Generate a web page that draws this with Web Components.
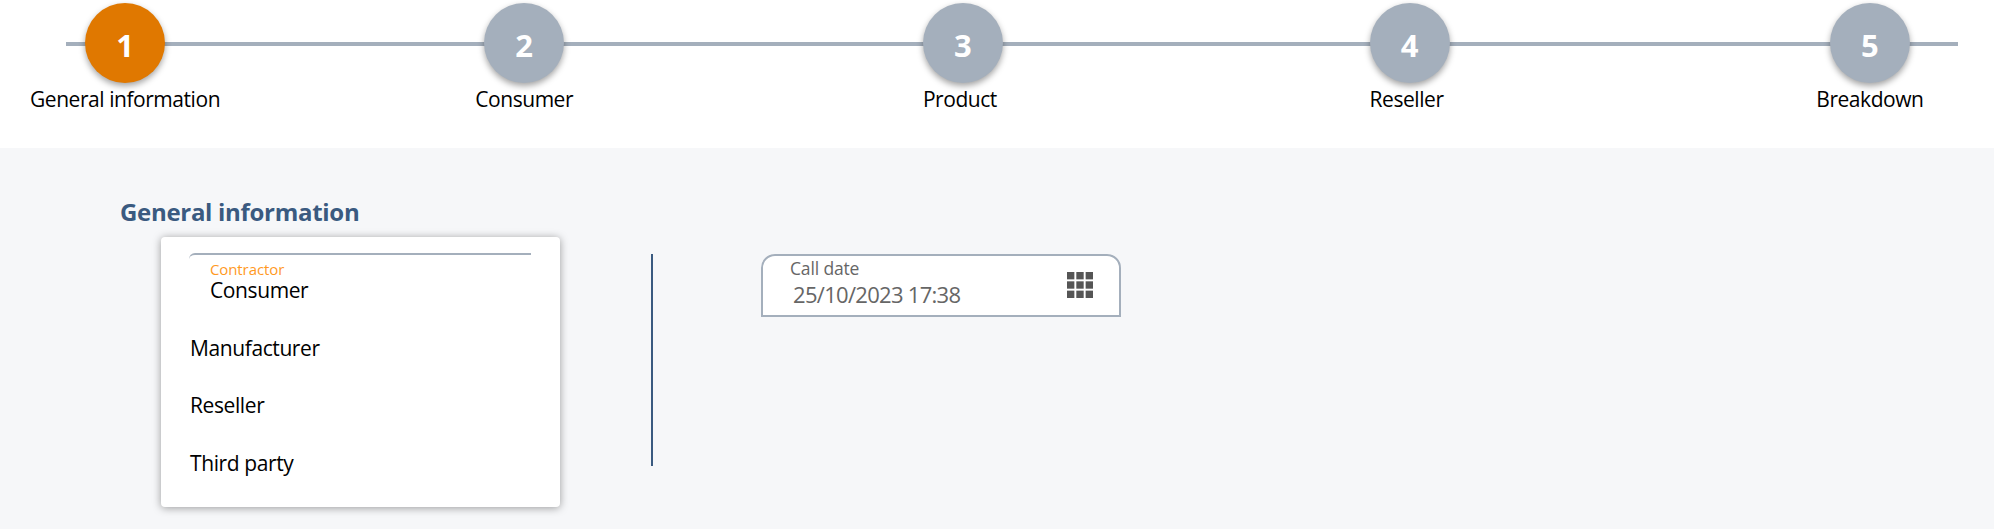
<!DOCTYPE html>
<html lang="en">
<head>
<meta charset="utf-8">
<title>Claim wizard</title>
<style>
  html, body { margin: 0; height: 100%; background: #fff; }
  body { font-family: "Open Sans", "Liberation Sans", sans-serif; overflow: hidden; }
</style>
</head>
<body>
<wizard-page>
  <wizard-stepper slot="header">
    <wizard-step number="1" active>General information</wizard-step>
    <wizard-step number="2" style="margin-left:255.2px">Consumer</wizard-step>
    <wizard-step number="3" style="margin-left:349.8px">Product</wizard-step>
    <wizard-step number="4" style="margin-left:366.7px">Reseller</wizard-step>
    <wizard-step number="5" style="margin-left:366.7px">Breakdown</wizard-step>
  </wizard-stepper>
  <form-section heading="General information">
    <radio-card slot="left">
      <radio-option label="Contractor" selected>Consumer</radio-option>
      <radio-option>Manufacturer</radio-option>
      <radio-option>Reseller</radio-option>
      <radio-option>Third party</radio-option>
    </radio-card>
    <date-field slot="right" label="Call date" value="25/10/2023 17:38"></date-field>
  </form-section>
</wizard-page>

<script>
// wizard-page — white header strip over the grey form panel.
class WizardPage extends HTMLElement {
  constructor() {
    super();
    this.attachShadow({ mode: "open" }).innerHTML = `
      <style>
        :host { display: flex; flex-direction: column; height: 100vh; }
        .head { height: 148px; flex: none; }
        .body { flex: 1; background: #f6f7f9; margin-right: 8px; }
      </style>
      <div class="head"><slot name="header"></slot></div>
      <div class="body"><slot></slot></div>`;
  }
}
customElements.define("wizard-page", WizardPage);

class WizardStepper extends HTMLElement {
  constructor() {
    super();
    this.attachShadow({ mode: "open" }).innerHTML = `
      <style>
        :host { display: block; position: relative; padding: 3px 0 0 30px; }
        .line {
          position: absolute; left: 66px; top: 42px;
          width: 1892px; height: 4px; background: #a4afbc;
        }
        .steps { position: relative; display: flex; align-items: flex-start; }
      </style>
      <div class="line"></div>
      <div class="steps"><slot></slot></div>`;
  }
}
customElements.define("wizard-stepper", WizardStepper);

// Labels shorter than the dot sit at its left edge, longer ones centre under it.
class WizardStep extends HTMLElement {
  constructor() {
    super();
    this.attachShadow({ mode: "open" }).innerHTML = `
      <style>
        :host {
          display: flex; flex-direction: column; align-items: center;
          flex: none; white-space: nowrap; color: #000;
          font-size: 21px; line-height: 27px; letter-spacing: -.45px;
        }
        .dot {
          box-sizing: border-box; width: 80px; height: 80px; border-radius: 50%;
          padding-top: 5px;
          display: flex; align-items: center; justify-content: center;
          background: #a4afbc; color: #fff;
          font-size: 31px; font-weight: 700; letter-spacing: 0;
          box-shadow: 0 3px 6px rgba(0,0,0,.36);
          margin-bottom: 3px;
        }
        .text { min-width: 80px; }
        :host([active]) .dot { background: #e07800; }
      </style>
      <div class="dot"></div>
      <span class="text"><slot></slot></span>`;
  }
  connectedCallback() {
    this.shadowRoot.querySelector(".dot").textContent = this.getAttribute("number");
  }
}
customElements.define("wizard-step", WizardStep);

class FormSection extends HTMLElement {
  constructor() {
    super();
    this.attachShadow({ mode: "open" }).innerHTML = `
      <style>
        :host { display: block; padding: 49px 0 0 120px; }
        h2 {
          margin: 0; font-size: 24px; line-height: 30px; font-weight: 700;
          letter-spacing: -.3px; color: #3a5a80;
        }
        .cols { display: flex; align-items: flex-start; margin: 10px 0 0 41px; }
        .rule {
          width: 2px; height: 212px; background: #3a5a80;
          margin: 17px 108px 0 91px; flex: none;
        }
      </style>
      <h2></h2>
      <div class="cols">
        <slot name="left"></slot>
        <div class="rule"></div>
        <slot name="right"></slot>
      </div>`;
  }
  connectedCallback() {
    this.shadowRoot.querySelector("h2").textContent = this.getAttribute("heading");
  }
}
customElements.define("form-section", FormSection);

class RadioCard extends HTMLElement {
  constructor() {
    super();
    this.attachShadow({ mode: "open" }).innerHTML = `
      <style>
        :host {
          display: block; box-sizing: border-box; width: 399px; height: 270px;
          flex: none; background: #fff; border-radius: 4px;
          box-shadow: 0 1px 8px rgba(0,0,0,.38);
          padding: 16px 29px 0 28px;
        }
      </style>
      <slot></slot>`;
  }
}
customElements.define("radio-card", RadioCard);

class RadioOption extends HTMLElement {
  constructor() {
    super();
    this.attachShadow({ mode: "open" }).innerHTML = `
      <style>
        :host {
          display: block; height: 57.4px; color: #000;
          font-size: 21px; letter-spacing: -.4px;
        }
        :host([selected]) { height: 80px; }
        .plain { padding: 2px 0 0 1px; line-height: 27px; }
        .picked {
          border-top: 2px solid #a4afbc; border-top-left-radius: 6px;
          padding: 5px 0 0 21px; line-height: 25px;
        }
        .label {
          display: block; font-size: 15px; line-height: 18px;
          letter-spacing: -.1px; color: #ff9a1f;
        }
      </style>
      <div class="row"></div>`;
  }
  connectedCallback() {
    const row = this.shadowRoot.querySelector(".row");
    if (this.hasAttribute("selected")) {
      row.className = "picked";
      row.innerHTML = `<span class="label"></span><slot></slot>`;
      row.firstChild.textContent = this.getAttribute("label");
    } else {
      row.className = "plain";
      row.innerHTML = `<slot></slot>`;
    }
  }
}
customElements.define("radio-option", RadioOption);

class DateField extends HTMLElement {
  constructor() {
    super();
    const cells = Array.from({ length: 9 }, (_, i) =>
      `<rect x="${(i % 3) * 9.5}" y="${Math.floor(i / 3) * 9.5}" width="7.5" height="7.5"/>`).join("");
    this.attachShadow({ mode: "open" }).innerHTML = `
      <style>
        :host {
          display: flex; align-items: flex-start; justify-content: space-between;
          box-sizing: border-box; width: 360px; height: 63px; flex: none;
          margin-top: 17px; background: #fff;
          border: 2px solid #a4afbc; border-radius: 14px 14px 0 0;
          padding: 1px 26px 0 27px; color: #666;
        }
        .label { display: block; font-size: 17.5px; line-height: 23px; letter-spacing: -.15px; }
        .value { display: block; font-size: 22px; line-height: 29px; letter-spacing: -.7px; padding-left: 3px; }
        svg { width: 26px; height: 26px; margin-top: 15px; fill: #555; flex: none; }
      </style>
      <div>
        <span class="label"></span>
        <span class="value"></span>
      </div>
      <svg viewBox="0 0 26.5 26.5" aria-hidden="true">${cells}</svg>`;
  }
  connectedCallback() {
    this.shadowRoot.querySelector(".label").textContent = this.getAttribute("label");
    this.shadowRoot.querySelector(".value").textContent = this.getAttribute("value");
  }
}
customElements.define("date-field", DateField);
</script>
</body>
</html>
